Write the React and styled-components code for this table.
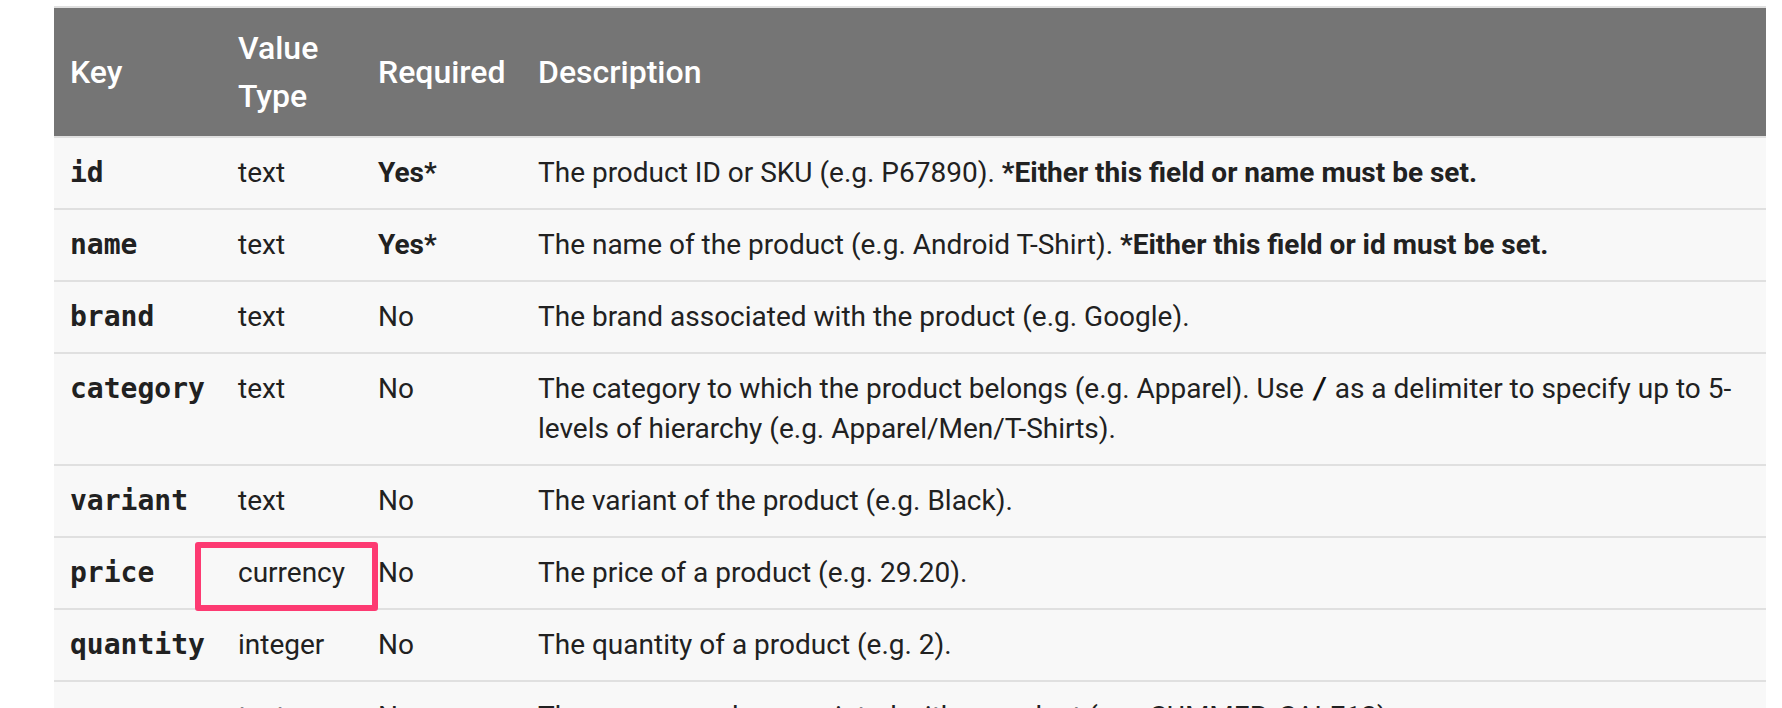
import styled, { createGlobalStyle } from 'styled-components';

const GlobalStyle = createGlobalStyle`
  body {
    margin: 0;
    background: #fff;
    font-family: Roboto, "Liberation Sans", sans-serif;
    color: #212121;
  }
`;

const Page = styled.div`
  padding: 6px 16px 0 54px;
`;

const Table = styled.table`
  width: 1712px;
  border-collapse: collapse;
  table-layout: fixed;
  border-top: 2px solid #e0e0e0;
  font-size: 28px;
  line-height: 40px;
`;

const Col = styled.col`
  width: ${(p) => (p.$width ? `${p.$width}px` : 'auto')};
`;

const HeadRow = styled.tr`
  background: #757575;
  border-bottom: 2px solid #e0e0e0;
`;

const Th = styled.th`
  padding: 16px 16px;
  color: #fff;
  font-size: 32px;
  font-weight: 500;
  line-height: 48px;
  text-align: left;
  vertical-align: middle;
`;

const Row = styled.tr`
  background: #f8f8f8;
  border-bottom: 2px solid #e0e0e0;
`;

const Td = styled.td`
  position: relative;
  padding: 15px 16px;
  vertical-align: top;
  font-weight: ${(p) => (p.$strong ? 700 : 400)};
`;

const KeyCode = styled.code`
  font-family: "DejaVu Sans Mono", "Liberation Mono", monospace;
  font-weight: 700;
  font-size: 28px;
`;

const InlineCode = styled.code`
  font-family: "DejaVu Sans Mono", "Liberation Mono", monospace;
  font-weight: 700;
  font-size: 28px;
  color: #111;
`;

const Strong = styled.strong`
  font-weight: 700;
`;

const Highlight = styled.span`
  position: absolute;
  left: -27px;
  right: -16px;
  top: 4px;
  bottom: -3px;
  box-sizing: border-box;
  border: 6px solid #fd3a72;
  border-radius: 3px;
  pointer-events: none;
`;

const rows = [
  {
    key: 'id',
    type: 'text',
    required: 'Yes*',
    desc: (
      <>
        The product ID or SKU (e.g. P67890). <Strong>*Either this field or name must be set.</Strong>
      </>
    ),
  },
  {
    key: 'name',
    type: 'text',
    required: 'Yes*',
    desc: (
      <>
        The name of the product (e.g. Android T-Shirt). <Strong>*Either this field or id must be set.</Strong>
      </>
    ),
  },
  { key: 'brand', type: 'text', required: 'No', desc: 'The brand associated with the product (e.g. Google).' },
  {
    key: 'category',
    type: 'text',
    required: 'No',
    desc: (
      <>
        The category to which the product belongs (e.g. Apparel). Use <InlineCode>/</InlineCode> as a delimiter to
        specify up to 5-levels of hierarchy (e.g. Apparel/Men/T-Shirts).
      </>
    ),
  },
  { key: 'variant', type: 'text', required: 'No', desc: 'The variant of the product (e.g. Black).' },
  { key: 'price', type: 'currency', required: 'No', desc: 'The price of a product (e.g. 29.20).', marked: true },
  { key: 'quantity', type: 'integer', required: 'No', desc: 'The quantity of a product (e.g. 2).' },
  {
    key: 'coupon',
    type: 'text',
    required: 'No',
    desc: 'The coupon code associated with a product (e.g. SUMMER_SALE13).',
  },
];

export default function App() {
  return (
    <Page>
      <GlobalStyle />
      <Table>
        <colgroup>
          <Col $width={168} />
          <Col $width={140} />
          <Col $width={160} />
          <Col />
        </colgroup>
        <thead>
          <HeadRow>
            <Th>Key</Th>
            <Th>Value Type</Th>
            <Th>Required</Th>
            <Th>Description</Th>
          </HeadRow>
        </thead>
        <tbody>
          {rows.map((row) => (
            <Row key={row.key}>
              <Td>
                <KeyCode>{row.key}</KeyCode>
              </Td>
              <Td>
                {row.type}
                {row.marked && <Highlight />}
              </Td>
              <Td $strong={row.required === 'Yes*'}>{row.required}</Td>
              <Td>{row.desc}</Td>
            </Row>
          ))}
        </tbody>
      </Table>
    </Page>
  );
}
